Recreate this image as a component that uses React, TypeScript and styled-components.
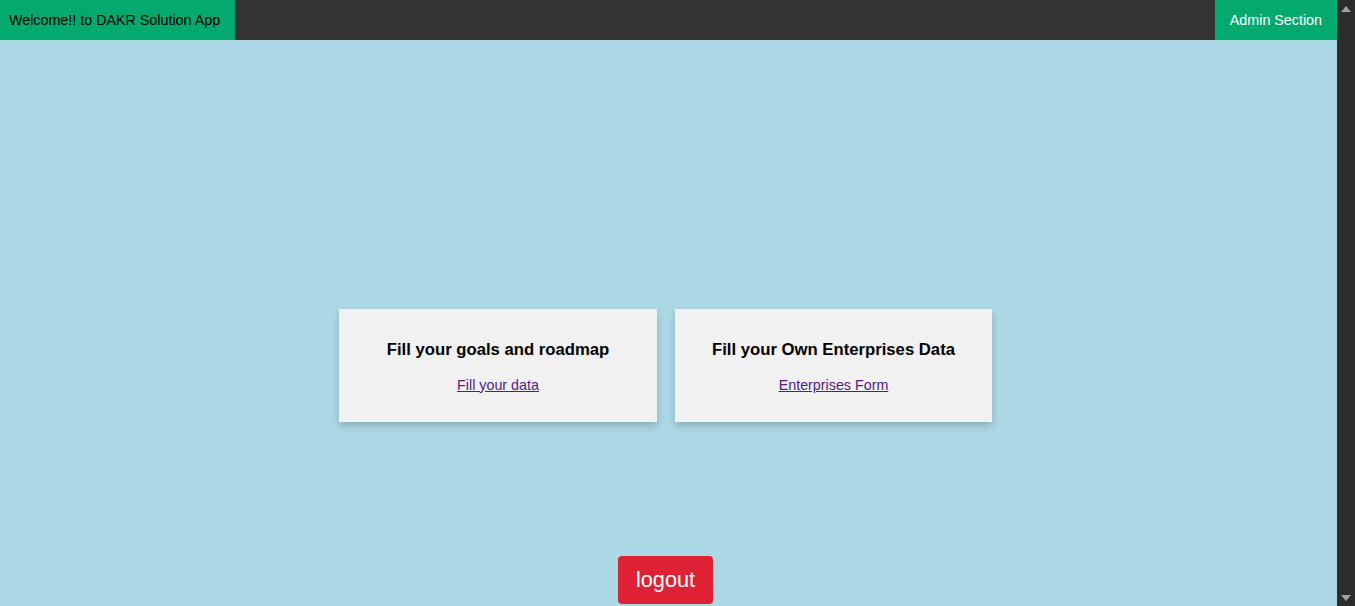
import React from "react";
import styled, { createGlobalStyle } from "styled-components";

const GlobalStyle = createGlobalStyle`
  html, body {
    margin: 0;
    overflow: hidden;
  }
  body {
    background: #add8e6;
    color: #000;
    font-family: "Liberation Sans", Arial, sans-serif;
  }
  * { box-sizing: border-box; }
`;

const Viewport = styled.div`
  display: flex;
  height: 100vh;
`;

const Page = styled.div`
  flex: 1;
  display: flex;
  flex-direction: column;
  min-width: 0;
  background: #add8e6;
`;

const ScrollTrack = styled.div`
  width: 18px;
  flex: none;
  background: #2c2c2c;
  display: flex;
  flex-direction: column;
  justify-content: space-between;
  align-items: center;
  padding: 6px 0 5px;
`;

const Arrow = styled.span<{ $down?: boolean }>`
  width: 0;
  height: 0;
  border-left: 5px solid transparent;
  border-right: 5px solid transparent;
  ${(p) =>
    p.$down
      ? "border-top: 6px solid #a0a0a0;"
      : "border-bottom: 6px solid #a0a0a0;"}
`;

const TopNav = styled.nav`
  display: flex;
  justify-content: space-between;
  align-items: stretch;
  height: 40px;
  background: #333333;
`;

const NavItem = styled.a<{ $light?: boolean }>`
  display: flex;
  align-items: center;
  background: #04aa6d;
  color: ${(p) => (p.$light ? "#ffffff" : "#000000")};
  font-size: 14.3px;
  white-space: nowrap;
  text-decoration: none;
  padding: ${(p) => (p.$light ? "0 15px" : "0 14px 0 9px")};
  width: ${(p) => (p.$light ? "auto" : "235px")};
  cursor: pointer;
`;

const Main = styled.main`
  flex: 1;
  display: flex;
  flex-direction: column;
  align-items: center;
  padding: 269px 6px 0 0;
`;

const CardRow = styled.div`
  display: flex;
  gap: 18px;
`;

const Card = styled.div<{ $w: number }>`
  width: ${(p) => p.$w}px;
  height: 113px;
  background: #f1f1f1;
  box-shadow: 0 4px 8px 0 rgba(0, 0, 0, 0.2);
  display: flex;
  flex-direction: column;
  align-items: center;
  padding-top: 31px;
`;

const CardTitle = styled.h3`
  margin: 0;
  font-size: 16.7px;
  line-height: 20px;
  font-weight: bold;
  color: #000;
`;

const CardLink = styled.a`
  margin-top: 16.5px;
  font-size: 14.3px;
  line-height: 17px;
  color: #551a8b;
  text-decoration: underline;
  cursor: pointer;
`;

const LogoutButton = styled.button`
  margin-top: 134px;
  width: 95px;
  height: 48px;
  background: #de2134;
  color: #ffffff;
  border: none;
  border-radius: 4px;
  font-family: "Liberation Sans", Arial, sans-serif;
  font-size: 21.7px;
  padding: 0;
  cursor: pointer;
`;

export default function App() {
  return (
    <>
      <GlobalStyle />
      <Viewport>
        <Page>
          <TopNav>
            <NavItem>Welcome!! to DAKR Solution App</NavItem>
            <NavItem $light>Admin Section</NavItem>
          </TopNav>
          <Main>
            <CardRow>
              <Card $w={318}>
                <CardTitle>Fill your goals and roadmap</CardTitle>
                <CardLink href="#">Fill your data</CardLink>
              </Card>
              <Card $w={317}>
                <CardTitle>Fill your Own Enterprises Data</CardTitle>
                <CardLink href="#">Enterprises Form</CardLink>
              </Card>
            </CardRow>
            <LogoutButton>logout</LogoutButton>
          </Main>
        </Page>
        <ScrollTrack>
          <Arrow />
          <Arrow $down />
        </ScrollTrack>
      </Viewport>
    </>
  );
}
